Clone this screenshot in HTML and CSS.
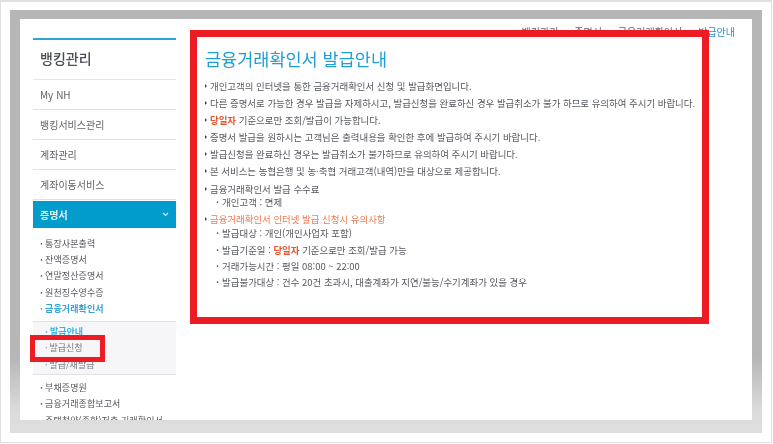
FILE: index.html
```html
<!DOCTYPE html>
<html lang="ko">

<head>
    <meta charset="UTF-8">
    <title>금융거래확인서 발급안내</title>
    <link rel="stylesheet" href="styles.css">
</head>

<body>
    <div class="shot">
        <div class="frame">
            <div class="inner">
                <div class="side">
                    <h2>뱅킹관리</h2>
                    <div class="menu">My NH</div>
                    <div class="menu">뱅킹서비스관리</div>
                    <div class="menu">계좌관리</div>
                    <div class="menu">계좌이동서비스</div>
                    <div class="menu active">
                        <span>증명서</span>
                        <svg width="7" height="5" viewBox="0 0 7 5"><path d="M1 1l2.5 2.5L6 1" fill="none" stroke="#cfe9f4" stroke-width="1.2"/></svg>
                    </div>
                    <ul class="sub">
                        <li>통장사본출력</li>
                        <li>잔액증명서</li>
                        <li>연말정산증명서</li>
                        <li>원천징수영수증</li>
                        <li class="on">금융거래확인서</li>
                    </ul>
                    <ul class="sub2">
                        <li class="on">발급안내</li>
                        <li>발급신청</li>
                        <li>발급/재발급</li>
                    </ul>
                    <ul class="sub">
                        <li>부채증명원</li>
                        <li>금융거래종합보고서</li>
                        <li>주택청약(종합)저축 거래확인서</li>
                    </ul>
                </div>
                <div class="content">
                    <div class="crumb">뱅킹관리 &gt; 증명서 &gt; 금융거래확인서 &gt; <b>발급안내</b></div>
                    <h1>금융거래확인서 발급안내</h1>
                    <p>개인고객의 인터넷을 통한 금융거래확인서 신청 및 발급화면입니다.</p>
                    <p>다른 증명서로 가능한 경우 발급을 자제하시고, 발급신청을 완료하신 경우 발급취소가 불가 하므로 유의하여 주시기 바랍니다.</p>
                    <p><em>당일자</em> 기준으로만 조회/발급이 가능합니다.</p>
                    <p>증명서 발급을 원하시는 고객님은 출력내용을 확인한 후에 발급하여 주시기 바랍니다.</p>
                    <p>발급신청을 완료하신 경우는 발급취소가 불가하므로 유의하여 주시기 바랍니다.</p>
                    <p>본 서비스는 농협은행 및 농·축협 거래고객(내역)만을 대상으로 제공합니다.</p>
                    <p>금융거래확인서 발급 수수료</p>
                    <div class="dot tight">개인고객 : 면제</div>
                    <p class="warn">금융거래확인서 인터넷 발급 신청시 유의사항</p>
                    <div class="dot tight">발급대상 : 개인(개인사업자 포함)</div>
                    <div class="dot">발급기준일 : <em>당일자</em> 기준으로만 조회/발급 가능</div>
                    <div class="dot">거래가능시간 : 평일 08:00 ~ 22:00</div>
                    <div class="dot">발급불가대상 : 건수 20건 초과시, 대출계좌가 지연/불능/수기계좌가 있을 경우</div>
                </div>
            </div>
        </div>
    </div>
    <div class="mark mark-main"></div>
    <div class="mark mark-side"></div>
</body>

</html>
```

FILE: styles.css
```css
* {
    box-sizing: border-box;
}

html, body {
    margin: 0;
    height: 100%;
    background-color: #fff;
}

body {
    font-family: "Noto Sans CJK KR", "Liberation Sans", sans-serif;
    overflow: hidden;
    position: relative;
}

ul {
    margin: 0;
    padding: 0;
    list-style: none;
}

.shot {
    width: 772px;
    height: 443px;
    border: 1px solid #e0e0e0;
    border-top-width: 2px;
    padding: 8px 9px 9px 9px;
    filter: blur(0.55px);
}

.frame {
    height: 423px;
    padding: 9px 10px 13px 10px;
    background: linear-gradient(#b5b6b5 0, #b5b6b5 82%, #dcdcdc 95%, #dedede 100%);
}

.inner {
    height: 100%;
    background-color: #fff;
    overflow: hidden;
    display: flex;
    padding: 19px 0 0 13px;
}

.side {
    width: 143px;
    flex-shrink: 0;
    border-top: 2px solid #2aa5d8;
}

.side h2 {
    margin: 0;
    height: 40px;
    padding-left: 7px;
    font-size: 14px;
    font-weight: 500;
    line-height: 37px;
    color: #4a4d55;
    border-bottom: 1px solid #e4e6ec;
}

.menu {
    height: 30px;
    padding-left: 7px;
    font-size: 10px;
    line-height: 29px;
    color: #60636b;
    border-bottom: 1px solid #dfe1e7;
}

.menu.active {
    height: 27px;
    margin-top: 1px;
    padding-right: 7px;
    line-height: 26px;
    font-weight: 700;
    color: #e4f3f9;
    background-color: #019ccb;
    border-bottom: 0;
    display: flex;
    justify-content: space-between;
    align-items: center;
}

.sub {
    padding: 7.5px 0 3.5px 7px;
}

.sub:last-child {
    padding-top: 5px;
}

.sub li {
    height: 16.4px;
    font-size: 9px;
    line-height: 16px;
    color: #55585f;
    letter-spacing: 0.1px;
    white-space: nowrap;
}

.sub li::before {
    content: "·";
    margin-right: 2px;
    font-weight: 700;
}

.sub li.on {
    color: #32a4d4;
    font-weight: 700;
}

.sub2 {
    height: 54px;
    padding: 2px 0 0 12px;
    background-color: #f6f6f8;
    border-top: 1px solid #dfe1e7;
    border-bottom: 1px solid #dfe1e7;
}

.sub2 li {
    height: 16.4px;
    font-size: 9px;
    line-height: 16px;
    color: #777a80;
}

.sub2 li::before {
    content: "·";
    margin-right: 2px;
}

.sub2 li.on {
    color: #3cb4e0;
    font-weight: 700;
}

.content {
    flex: 1;
    padding-left: 29px;
    margin-top: -13px;
    color: #55585f;
    font-size: 9.45px;
}

.crumb {
    height: 14px;
    padding-right: 17px;
    text-align: right;
    font-size: 10px;
    word-spacing: 2.4px;
    line-height: 14px;
    color: #666;
}

.crumb b {
    font-weight: 400;
    color: #2f8fc9;
}

h1 {
    margin: 7px 0 6px;
    height: 26px;
    font-size: 17.5px;
    font-weight: 400;
    line-height: 26px;
    color: #1d9fd6;
}

p {
    margin: 0;
    height: 17.1px;
    line-height: 17px;
    padding-left: 5px;
    position: relative;
    white-space: nowrap;
}

p::before {
    content: "";
    position: absolute;
    left: 0;
    top: 6px;
    border-left: 2.5px solid #444;
    border-top: 2px solid transparent;
    border-bottom: 2px solid transparent;
}

em {
    font-style: normal;
    font-weight: 700;
    color: #e9552b;
}

.warn {
    margin-top: 2px;
    color: #ee7b4f;
}

.dot {
    height: 16px;
    line-height: 16px;
    padding-left: 11px;
    white-space: nowrap;
}

.dot.tight {
    height: 14px;
    margin-top: -2.5px;
    line-height: 14px;
}

.dot.tight + .dot {
    margin-top: 2px;
}

.dot::before {
    content: "·";
    margin-right: 3px;
    font-weight: 700;
}

/* red annotation boxes over the capture */
.mark {
    position: absolute;
    border-style: solid;
    border-color: #ed1c24;
}

.mark-main {
    left: 190px;
    top: 30px;
    width: 519px;
    height: 294px;
    border-width: 7px;
}

.mark-side {
    left: 30px;
    top: 335px;
    width: 75px;
    height: 27px;
    border-width: 5px;
}
```
